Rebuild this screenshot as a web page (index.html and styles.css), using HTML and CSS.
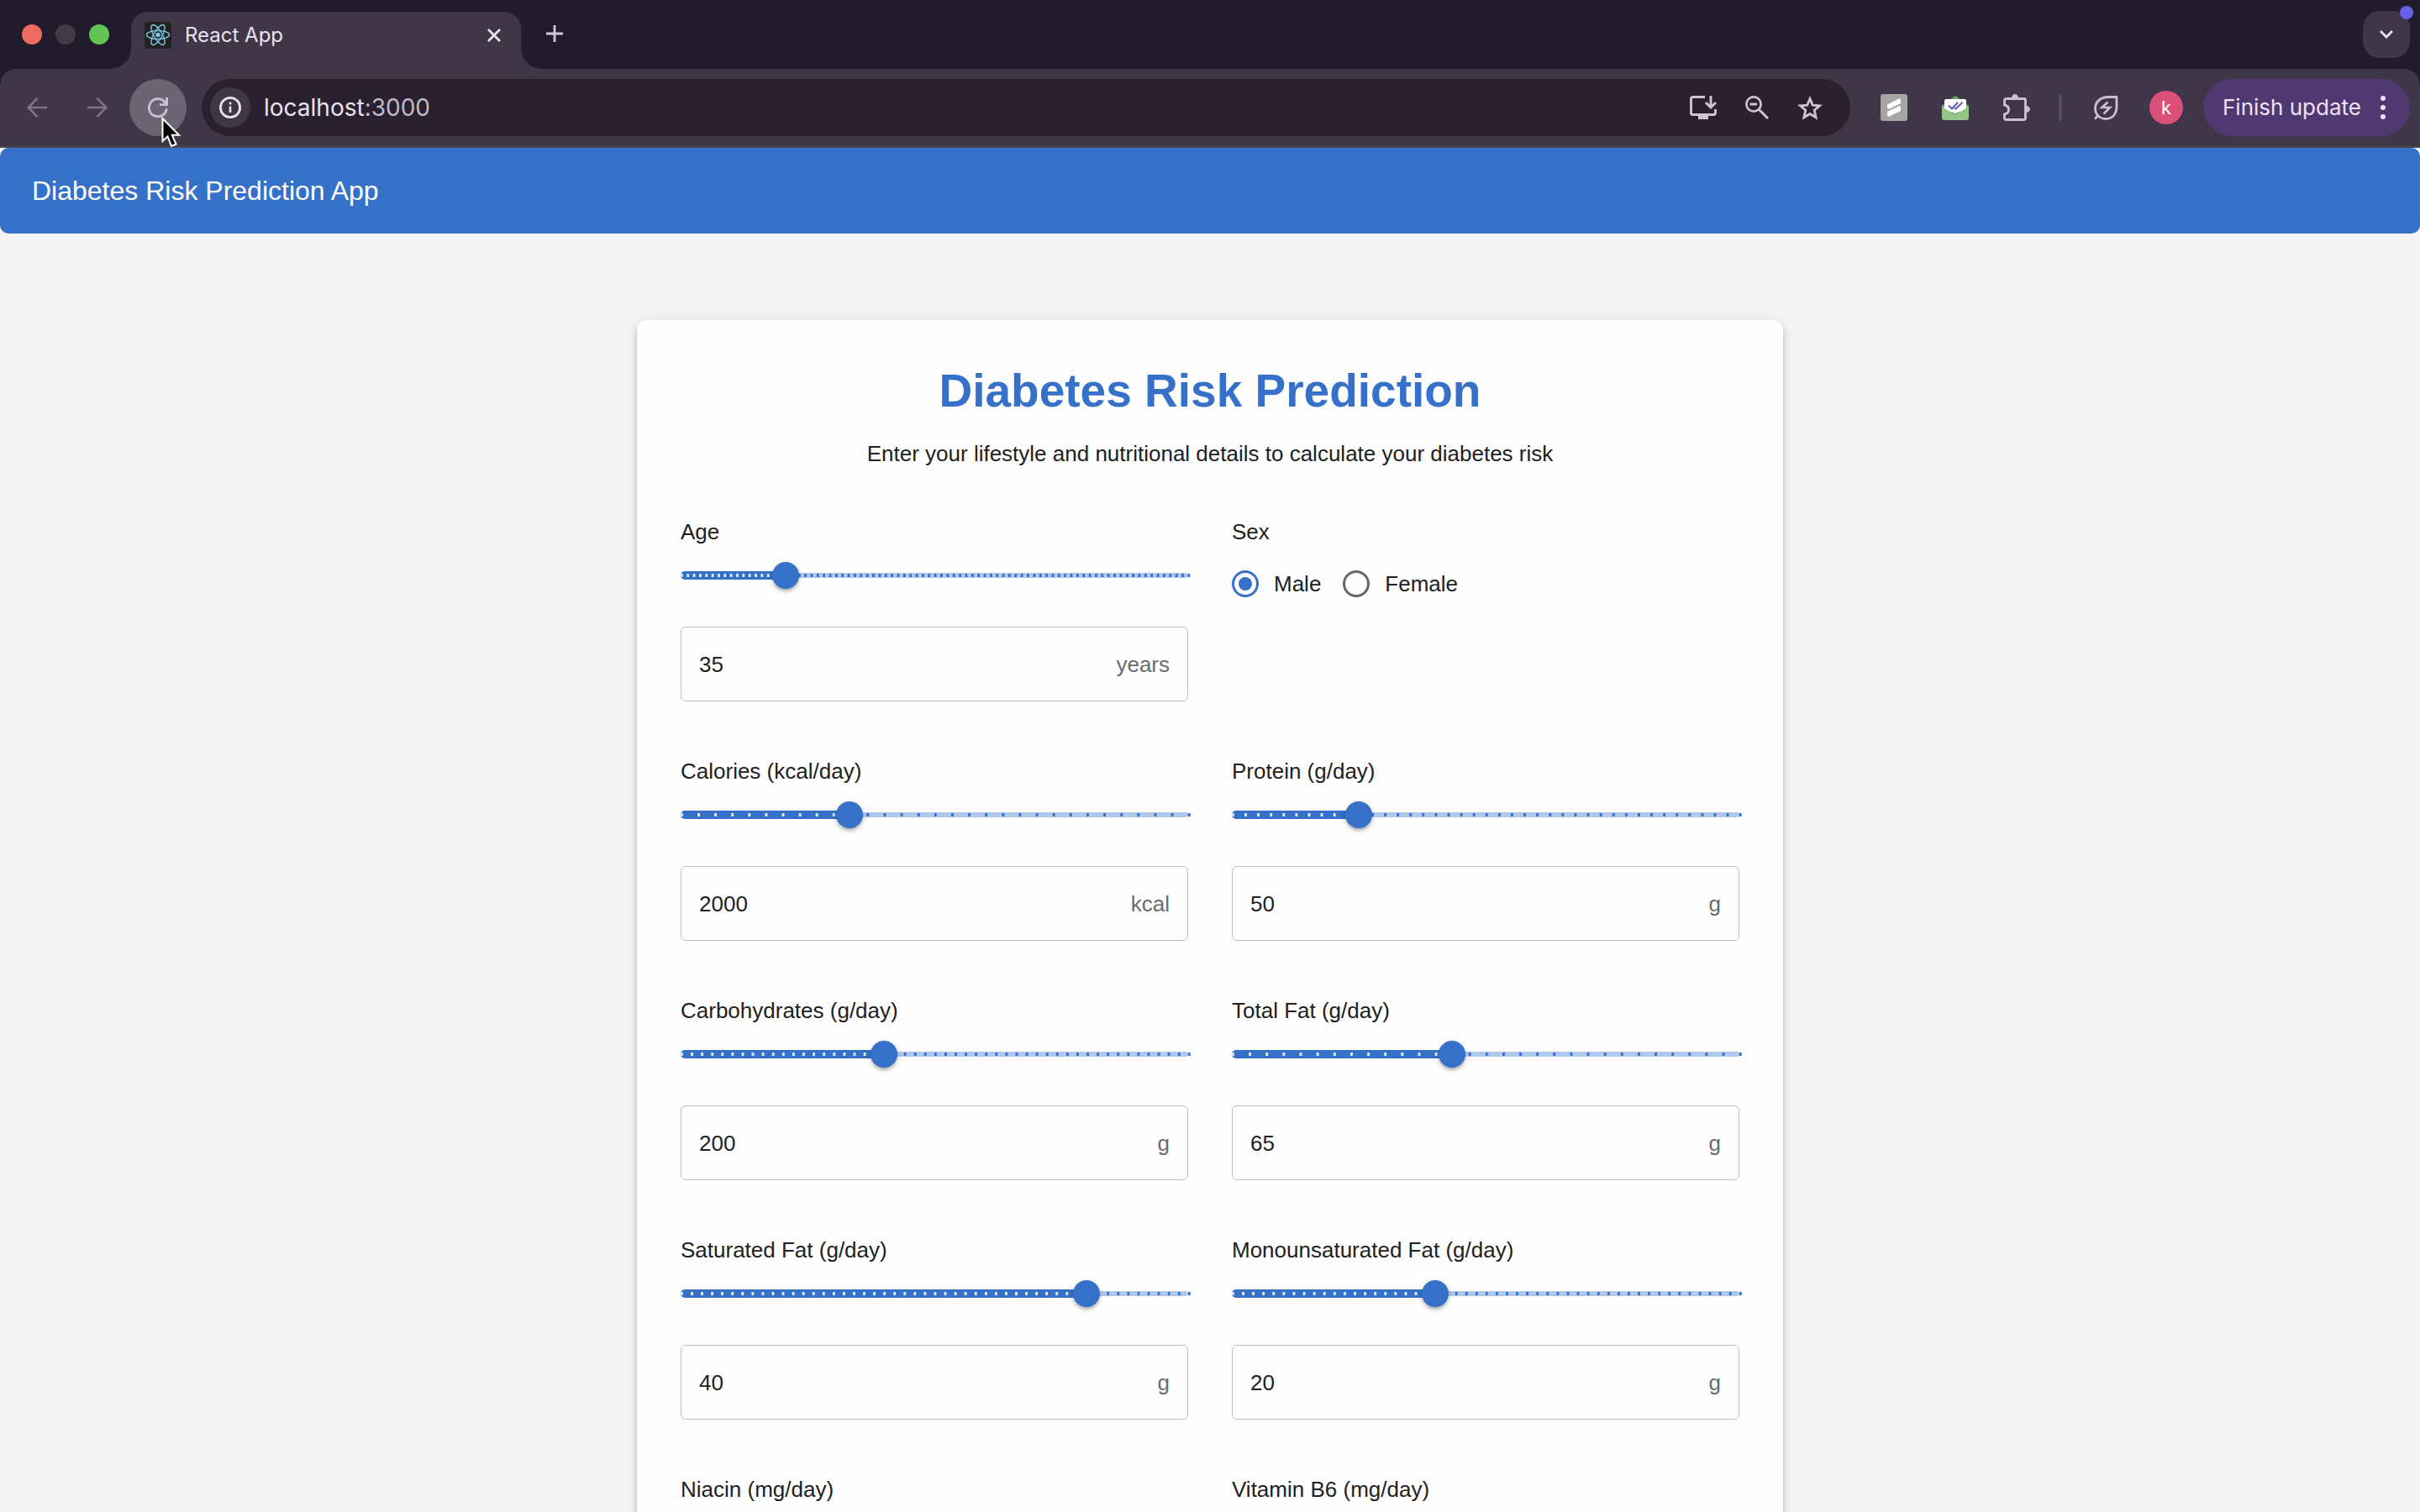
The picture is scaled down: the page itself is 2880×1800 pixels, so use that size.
FILE: index.html
```html
<!DOCTYPE html>
<html lang="en">
<head>
<meta charset="utf-8">
<title>React App</title>
<link rel="stylesheet" href="styles.css">
</head>
<body>
<header class="browser">
  <div class="tabstrip">
    <div class="lights"><span class="light close"></span><span class="light"></span><span class="light full"></span></div>
    <div class="tab">
      <svg class="favicon" viewBox="0 0 32 32" width="32" height="32"><rect width="32" height="32" rx="4" fill="#222"/><g fill="none" stroke="#7cc8e6" stroke-width="1.4"><ellipse cx="16" cy="15.500" rx="13.500" ry="5"/><ellipse cx="16" cy="15.500" rx="13.500" ry="5" transform="rotate(60 16 15.500)"/><ellipse cx="16" cy="15.500" rx="13.500" ry="5" transform="rotate(120 16 15.500)"/></g><circle cx="16" cy="15.500" r="2.800" fill="#7cc8e6"/></svg>
      <span class="tab-title">React App</span>
      <button class="bare" aria-label="Close tab"><svg viewBox="0 0 16 16" width="16" height="16"><path d="M1 1l14 14M15 1L1 15" stroke="#e9e2ee" stroke-width="2.800"/></svg></button>
    </div>
    <button class="bare new-tab" aria-label="New tab"><svg viewBox="0 0 20 20" width="20" height="20"><path d="M10 0v20M0 10h20" stroke="#d3c8dd" stroke-width="2.800"/></svg></button>
    <button class="tab-search" aria-label="Search tabs"><svg viewBox="0 0 16 10" width="16" height="10"><path d="M1 1l7 7 7-7" fill="none" stroke="#e9e2ee" stroke-width="2.800"/></svg><span class="badge"></span></button>
  </div>
  <div class="toolbar">
    <button class="nav" aria-label="Back"><svg viewBox="0 0 24 24" width="24" height="24"><path d="M24 12H2M12.500 1L1.500 12l11 11" fill="none" stroke="#7d7485" stroke-width="2.600"/></svg></button>
    <button class="nav" aria-label="Forward"><svg viewBox="0 0 24 24" width="24" height="24"><path d="M0 12h22M11.500 1l11 11-11 11" fill="none" stroke="#7d7485" stroke-width="2.600"/></svg></button>
    <button class="nav reload" aria-label="Reload"><svg viewBox="0 0 24 24" width="24" height="24"><path d="M22.300 13.500A10.500 10.500 0 1 1 20 5.500L22 8" fill="none" stroke="#cbbfd8" stroke-width="2.800"/><path d="M24 0v10H14V7.200h7V0z" fill="#cbbfd8"/></svg></button>
    <div class="address">
      <button class="site-info" aria-label="Site information"><svg viewBox="0 0 26 26" width="26" height="26"><circle cx="13" cy="13" r="11.600" fill="none" stroke="#e9e2ee" stroke-width="2.800"/><path d="M13 11.500v7.500M13 6.500v3" stroke="#e9e2ee" stroke-width="2.600"/></svg></button>
      <span class="url">localhost<span class="port">:3000</span></span>
      <button class="bare" aria-label="Install app"><svg viewBox="0 0 32 28" width="32" height="28"><path d="M18 1.500H3.500a2 2 0 0 0-2 2v17a2 2 0 0 0 2 2h25a2 2 0 0 0 2-2V16M25 0v14M19 8l6 6 6-6" fill="none" stroke="#cdc5cf" stroke-width="2.900"/><path d="M10 23h12v5H10z" fill="#cdc5cf"/></svg></button>
      <button class="bare" aria-label="Zoom"><svg viewBox="0 0 28 28" width="28" height="28"><path d="M16.500 16.500L27 27M5.500 10h8.500" stroke="#cdc5cf" stroke-width="2.900"/><circle cx="10" cy="10" r="8.600" fill="none" stroke="#cdc5cf" stroke-width="2.700"/></svg></button>
      <button class="bare" aria-label="Bookmark this tab"><svg viewBox="0 0 30 29" width="30" height="29"><path d="M15 3.500l3.200 7.600 8.300.7-6.300 5.400 1.900 8.600L15 21.500l-7.100 4.300 1.900-8.600-6.300-5.400 8.300-.7z" fill="none" stroke="#cdc5cf" stroke-width="2.800"/></svg></button>
    </div>
    <div class="extensions">
      <button class="bare" aria-label="Scribe"><svg viewBox="0 0 32 32" width="32" height="32"><rect width="32" height="32" rx="3" fill="#a5a5a5"/><path d="M8 12.500L23 5l1 1v5L9.500 18 8 16.500zM8 21l14.500-7 1.500 1.500V20L9.500 27 8 25.500z" fill="#fff"/></svg></button>
      <button class="bare" aria-label="Mail tracker"><svg viewBox="0 0 32 30" width="32" height="30"><path d="M6 9l8-7q2-1.500 4 0l8 7z" fill="#5f9e62"/><path d="M0 13l4-3h24l4 3v8H0z" fill="#6aa86a"/><rect x="3" y="5" width="26" height="15" rx="2" fill="#fff"/><path d="M0 12l3 4 13 7 13-7 3-4v15a3 3 0 0 1-3 3H3a3 3 0 0 1-3-3z" fill="#93c785"/><path d="M3 15l13 7.500L29 15z" fill="#fff"/><path d="M8 12.500l4 4 7-7.500M15 15.500l1.500 1L24.500 9" fill="none" stroke="#5a5ea8" stroke-width="2"/></svg></button>
      <button class="bare" aria-label="Extensions"><svg viewBox="0 0 32 32" width="32" height="32"><path d="M1.500 13V7.500a2 2 0 0 1 2-2h21a2 2 0 0 1 2 2v21a2 2 0 0 1-2 2h-21a2 2 0 0 1-2-2V24q5-1 5-5.500T1.500 13z" fill="none" stroke="#cbbfd8" stroke-width="2.900"/><path d="M10 5a4 5 0 0 1 8 0zM27 14a5 4 0 0 1 0 8z" fill="#cbbfd8"/></svg></button>
    </div>
    <span class="divider"></span>
    <button class="bare leaf" aria-label="Energy saver"><svg viewBox="0 0 29 29" width="29" height="29"><path d="M1 27.500l4-4M26.900 1.500H17C7 1.500 1.500 8 1.500 15S7 27.500 14 27.500c9 0 13-7 13-15z" fill="none" stroke="#cbbfd8" stroke-width="2.800"/><path d="M16.500 7.500L9.500 14h9.500L11.500 21.500" fill="none" stroke="#cbbfd8" stroke-width="2.600"/></svg></button>
    <button class="avatar">k</button>
    <button class="update">Finish update<svg viewBox="0 0 6 28" width="6" height="28"><g fill="#efe0fb"><circle cx="3" cy="3" r="3"/><circle cx="3" cy="14" r="3"/><circle cx="3" cy="25" r="3"/></g></svg></button>
  </div>
  <svg class="cursor" viewBox="0 0 24 38" width="24" height="38"><path d="M1.500 2v27l6-5.500 4.500 11.500 5.500-2.300-4.700-11H21z" fill="#000" stroke="#fff" stroke-width="2"/></svg>
</header>

<div class="page">
  <div class="appbar">Diabetes Risk Prediction App</div>
  <main class="card">
    <h1>Diabetes Risk Prediction</h1>
    <p class="lead">Enter your lifestyle and nutritional details to calculate your diabetes risk</p>
    <form class="fields">
      <div class="field">
        <label for="age">Age</label>
        <div class="slider"><span class="marks" style="--steps:82"></span><span class="track" style="--steps:17;width:20.73%"></span><input type="range" aria-label="Age slider" min="18" max="100" value="35"></div>
        <div class="box"><input type="text" id="age" value="35"><span>years</span></div>
      </div>
      <fieldset class="field">
        <legend>Sex</legend>
        <div class="radios">
          <label><input type="radio" name="sex" checked>Male</label>
          <label><input type="radio" name="sex">Female</label>
        </div>
      </fieldset>
      <div class="field">
        <label for="calories">Calories (kcal/day)</label>
        <div class="slider"><span class="marks" style="--steps:30"></span><span class="track" style="--steps:10;width:33.33%"></span><input type="range" aria-label="Calories slider" min="1000" max="4000" step="100" value="2000"></div>
        <div class="box"><input type="text" id="calories" value="2000"><span>kcal</span></div>
      </div>
      <div class="field">
        <label for="protein">Protein (g/day)</label>
        <div class="slider"><span class="marks" style="--steps:40"></span><span class="track" style="--steps:10;width:25%"></span><input type="range" aria-label="Protein slider" min="0" max="200" step="5" value="50"></div>
        <div class="box"><input type="text" id="protein" value="50"><span>g</span></div>
      </div>
      <div class="field">
        <label for="carbs">Carbohydrates (g/day)</label>
        <div class="slider"><span class="marks" style="--steps:50"></span><span class="track" style="--steps:20;width:40%"></span><input type="range" aria-label="Carbohydrates slider" min="0" max="500" step="10" value="200"></div>
        <div class="box"><input type="text" id="carbs" value="200"><span>g</span></div>
      </div>
      <div class="field">
        <label for="fat">Total Fat (g/day)</label>
        <div class="slider"><span class="marks" style="--steps:30"></span><span class="track" style="--steps:13;width:43.33%"></span><input type="range" aria-label="Total fat slider" min="0" max="150" step="5" value="65"></div>
        <div class="box"><input type="text" id="fat" value="65"><span>g</span></div>
      </div>
      <div class="field">
        <label for="saturated">Saturated Fat (g/day)</label>
        <div class="slider"><span class="marks" style="--steps:50"></span><span class="track" style="--steps:40;width:80%"></span><input type="range" aria-label="Saturated fat slider" min="0" max="50" value="40"></div>
        <div class="box"><input type="text" id="saturated" value="40"><span>g</span></div>
      </div>
      <div class="field">
        <label for="mono">Monounsaturated Fat (g/day)</label>
        <div class="slider"><span class="marks" style="--steps:50"></span><span class="track" style="--steps:20;width:40%"></span><input type="range" aria-label="Monounsaturated fat slider" min="0" max="50" value="20"></div>
        <div class="box"><input type="text" id="mono" value="20"><span>g</span></div>
      </div>
      <div class="field">
        <label for="niacin">Niacin (mg/day)</label>
        <div class="slider"><input type="range" id="niacin" min="0" max="50" value="16"></div>
      </div>
      <div class="field">
        <label for="b6">Vitamin B6 (mg/day)</label>
        <div class="slider"><input type="range" id="b6" min="0" max="10" value="2"></div>
      </div>
    </form>
  </main>
</div>
</body>
</html>
```
FILE: styles.css
```css
* { box-sizing: border-box; }
:root {
  --blue: #3671c9;
  --strip: #221b2c;
  --bar: #3f3748;
  --ink: #212121;
}
body {
  margin: 0;
  height: 100vh;
  display: flex;
  flex-direction: column;
  overflow: hidden;
  background: #f4f4f4;
  color: var(--ink);
  font: 26px/38px "Liberation Sans", Arial, sans-serif;
}
button { border: 0; padding: 0; font: inherit; color: inherit; background: none; }
svg { display: block; }

/* Browser window */
.browser { position: relative; flex: none; background: var(--strip); font-family: Inter, sans-serif; color: #e9e2ee; }
.tabstrip { display: flex; align-items: center; height: 82px; padding: 0 12px 0 26px; }
.lights { display: flex; gap: 16px; width: 130px; }
.light { width: 24px; height: 24px; border-radius: 50%; background: #413a49; }
.light.close { background: #ed6a5f; }
.light.full { background: #61c454; }
.tab {
  position: relative;
  display: flex;
  align-items: center;
  align-self: flex-end;
  width: 464px;
  height: 68px;
  padding: 0 24px 12px 16px;
  border-radius: 20px 20px 0 0;
  background: var(--bar);
}
.tab::before, .tab::after { content: ""; position: absolute; bottom: 0; width: 24px; height: 24px; }
.tab::before { right: 100%; background: radial-gradient(circle at 0 0, transparent 23px, var(--bar) 24px); }
.tab::after { left: 100%; background: radial-gradient(circle at 100% 0, transparent 23px, var(--bar) 24px); }
.tab-title { flex: 1; margin-left: 16px; font-size: 24px; line-height: 32px; }
.new-tab { margin: 0 auto 2px 30px; }
.tab-search { position: relative; display: grid; place-items: center; width: 56px; height: 56px; border-radius: 20px; background: var(--bar); }
.badge { position: absolute; top: -6px; right: -4px; width: 16px; height: 16px; border-radius: 50%; background: #6560e8; }
.toolbar {
  display: flex;
  align-items: center;
  height: 94px;
  padding: 0 12px 0 10px;
  border-bottom: 2px solid #4b4552;
  border-radius: 20px 20px 0 0;
  background: var(--bar);
}
.nav { display: grid; place-items: center; width: 68px; height: 68px; margin-right: 4px; border-radius: 50%; }
.reload { margin-right: 18px; background: #6b6473; }
.address { flex: 1; display: flex; align-items: center; gap: 34px; height: 68px; padding: 0 33px 0 10px; border-radius: 34px; background: #292030; }
.site-info { display: grid; place-items: center; width: 48px; height: 48px; margin-right: -18px; border-radius: 50%; background: var(--bar); }
.url { flex: 1; font-size: 28px; line-height: 40px; }
.port { color: #c3bac8; }
.extensions { display: flex; align-items: center; gap: 41px; margin-left: 36px; }
.divider { width: 4px; height: 32px; margin: 0 38px 0 34px; border-radius: 2px; background: #564d60; }
.avatar { width: 40px; height: 40px; margin: 0 24px 0 37px; border-radius: 50%; background: #db4f79; color: #fff; font-size: 22px; line-height: 40px; }
.update { display: flex; align-items: center; justify-content: space-between; width: 246px; height: 68px; padding: 0 29px 0 23px; border-radius: 34px; background: #503871; color: #efe0fb; font-size: 26px; }
.cursor { position: absolute; left: 192px; top: 139px; }

/* Page */
.page { flex: 1; min-height: 0; overflow: hidden; background: linear-gradient(#fff 20px, transparent 20px); }
.appbar {
  display: flex;
  align-items: center;
  height: 102px;
  padding: 0 38px;
  border-radius: 10px;
  background: var(--blue);
  color: #fff;
  font-size: 32px;
}
.card {
  max-width: 1364px;
  margin: 103px auto;
  padding: 52px;
  border-radius: 12px;
  background: #fefefe;
  box-shadow: 0 5px 5px -3px rgba(0, 0, 0, .2), 0 5px 6px rgba(0, 0, 0, .14), 0 2px 13px rgba(0, 0, 0, .12);
}
h1 { margin: 0 0 24px; color: var(--blue); font-size: 55px; line-height: 64px; text-align: center; }
.lead { margin: 0 0 55px; text-align: center; }
.fields { display: grid; grid-template-columns: 1fr 1fr; gap: 64px 52px; }
.field { min-width: 0; margin: 0; padding: 0; border: 0; }
.field > label, legend { display: block; padding: 0; }

/* Slider: pale rail, step marks, filled track, then the native range on top */
.slider { position: relative; height: 66px; margin-bottom: 28px; }
.slider::before { content: ""; position: absolute; inset: 30px 0; border-radius: 3px; background: #b0c8ec; }
.marks, .track {
  position: absolute;
  left: 0;
  background-repeat: repeat-x;
  background-size: calc(100% / var(--steps)) 4px;
  background-position: 0 center;
}
.marks {
  top: 30px;
  width: calc(100% + 3px);
  height: 6px;
  padding-right: 3px;
  background-image: linear-gradient(to right, var(--blue) 3px, transparent 3px);
  background-origin: content-box;
}
.track {
  top: 28px;
  height: 10px;
  border-radius: 5px;
  background-color: var(--blue);
  background-image: linear-gradient(to right, #dfeafa 3px, transparent 3px);
}
.slider input { position: absolute; left: -16px; top: 0; width: calc(100% + 32px); height: 66px; margin: 0; appearance: none; background: none; }
.slider input::-webkit-slider-thumb {
  appearance: none;
  width: 32px;
  height: 32px;
  border-radius: 50%;
  background: var(--blue);
  box-shadow: 0 4px 4px -2px rgba(0, 0, 0, .2), 0 2px 4px rgba(0, 0, 0, .14), 0 2px 8px rgba(0, 0, 0, .12);
}

.box { display: flex; align-items: center; height: 89px; padding: 0 21px; border: 1px solid #c0c0c0; border-radius: 6px; }
.box input { flex: 1; min-width: 0; padding: 0; border: 0; outline: 0; background: none; color: inherit; font: inherit; }
.box span { color: #6b6b6b; }

.radios { display: flex; gap: 26px; padding-top: 24px; }
.radios label { display: flex; align-items: center; gap: 18px; }
.radios input { appearance: none; display: grid; place-items: center; width: 32px; height: 32px; margin: 0; border: 3px solid #666; border-radius: 50%; }
.radios input:checked { border-color: var(--blue); }
.radios input:checked::before { content: ""; width: 16px; height: 16px; border-radius: 50%; background: var(--blue); }
```
